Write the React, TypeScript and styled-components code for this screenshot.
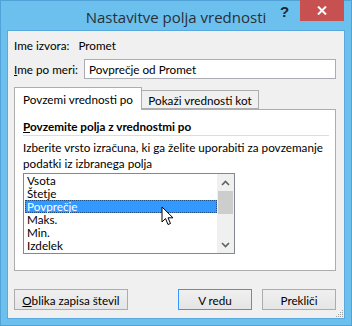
import React from 'react';
import styled, { createGlobalStyle } from 'styled-components';

const GlobalStyle = createGlobalStyle`
  html, body { margin: 0; padding: 0; background: #6bc0ee; }
  body { font-family: Lato, "Liberation Sans", Arial, sans-serif; }
`;

const Frame = styled.div`
  position: relative;
  width: 352px;
  height: 326px;
  box-sizing: border-box;
  background: #6bc0ee;
  box-shadow: inset 0 0 0 1px #52a2d8;
  display: flex;
  flex-direction: column;
  padding: 0 8px 8px 8px;
`;

const TitleBar = styled.div`
  height: 31px;
  display: flex;
  align-items: center;
  justify-content: center;
  font-family: "Open Sans", "Noto Sans", sans-serif;
  font-size: 15px;
  color: #2a2f36;
  padding-top: 2px;
  box-sizing: border-box;
`;

const HelpGlyph = styled.div`
  position: absolute;
  top: 3px;
  left: 280px;
  font-family: "Liberation Sans", Arial, sans-serif;
  font-weight: bold;
  font-size: 15px;
  color: #1e2630;
`;

const CloseButton = styled.div`
  position: absolute;
  top: 0;
  right: 8px;
  width: 44px;
  height: 21px;
  background: #c75050;
  display: flex;
  align-items: center;
  justify-content: center;
`;

const Client = styled.div`
  position: relative;
  flex: 1;
  background: #f0f0f0;
  box-shadow: 0 0 0 1px #5aa9de;
  display: flex;
  flex-direction: column;
  padding: 0 8px 0 6px;
  font-size: 11.7px;
  color: #000;
`;

const SourceRow = styled.div`
  height: 28px;
  display: flex;
  align-items: center;
  gap: 9px;
`;

const NameRow = styled.div`
  height: 20px;
  display: flex;
  align-items: center;
  justify-content: space-between;
`;

const TextInput = styled.div`
  width: 252px;
  height: 20px;
  box-sizing: border-box;
  border: 1px solid #abadb3;
  background: #fff;
  display: flex;
  align-items: center;
  padding-left: 4px;
`;

const TabStrip = styled.div`
  margin-top: 8px;
  height: 22px;
  display: flex;
  align-items: flex-end;
`;

const Tab = styled.div<{ $active?: boolean }>`
  box-sizing: border-box;
  height: ${(p) => (p.$active ? '23px' : '19px')};
  width: ${(p) => (p.$active ? '128px' : '118px')};
  border: 1px solid #adadad;
  border-bottom: ${(p) => (p.$active ? 'none' : '1px solid #adadad')};
  background: ${(p) => (p.$active ? '#fff' : '#f0f0f0')};
  display: flex;
  align-items: center;
  justify-content: center;
  margin-left: ${(p) => (p.$active ? '0' : '-1px')};
  margin-bottom: ${(p) => (p.$active ? '-1px' : '0')};
  position: relative;
  z-index: ${(p) => (p.$active ? 1 : 0)};
  padding-top: ${(p) => (p.$active ? '0' : '1px')};
`;

const Panel = styled.div`
  box-sizing: border-box;
  height: 162px;
  border: 1px solid #adadad;
  background: #fff;
  padding: 8px 6px 0 8px;
  display: flex;
  flex-direction: column;
`;

const SectionTitle = styled.div`
  font-weight: bold;
  height: 16px;
  line-height: 16px;
  padding-bottom: 1px;
  border-bottom: 1px solid #dcdcdc;
`;

const Description = styled.div`
  margin-top: 3px;
  line-height: 16px;
  white-space: nowrap;
`;

const ListBox = styled.div`
  margin-top: 2px;
  width: 212px;
  height: 81px;
  box-sizing: border-box;
  border: 1px solid #828790;
  display: flex;
  padding: 0 0 0 1px;
`;

const Items = styled.div`
  flex: 1;
  display: flex;
  flex-direction: column;
`;

const Item = styled.div<{ $selected?: boolean }>`
  height: 13px;
  line-height: 13px;
  padding-left: 2px;
  box-sizing: border-box;
  background: ${(p) => (p.$selected ? '#3399ff' : 'transparent')};
  color: ${(p) => (p.$selected ? '#fff' : '#000')};
  outline: ${(p) => (p.$selected ? '1px dotted #1a4f8a' : 'none')};
  outline-offset: -1px;
`;

const ScrollBar = styled.div`
  width: 17px;
  background: #f0f0f0;
  display: flex;
  flex-direction: column;
  align-items: center;
`;

const Arrow = styled.div`
  height: 17px;
  width: 17px;
  display: flex;
  align-items: center;
  justify-content: center;
`;

const Thumb = styled.div`
  width: 15px;
  height: 23px;
  background: #cdcdcd;
`;

const Track = styled.div`
  flex: 1;
`;

const ButtonRow = styled.div`
  margin-top: 18px;
  display: flex;
  align-items: center;
`;

const Button = styled.div<{ $w: number; $default?: boolean }>`
  box-sizing: border-box;
  width: ${(p) => p.$w}px;
  height: 21px;
  border: 1px solid ${(p) => (p.$default ? '#3399ff' : '#acacac')};
  background: linear-gradient(#f0f0f0, #e5e5e5);
  display: flex;
  align-items: center;
  justify-content: center;
`;

const Spacer = styled.div`
  flex: 1;
`;

const Cursor = styled.svg`
  position: absolute;
  left: 153px;
  top: 175px;
`;

const Grip = styled.svg`
  position: absolute;
  right: 0;
  bottom: 0;
`;

const U = styled.span`
  text-decoration: underline;
`;

const Chevron: React.FC<{ up?: boolean }> = ({ up }) => (
  <svg width="9" height="6" viewBox="0 0 9 6">
    <path
      d={up ? 'M1 5 L4.5 1.5 L8 5' : 'M1 1 L4.5 4.5 L8 1'}
      fill="none"
      stroke="#606060"
      strokeWidth="1.6"
    />
  </svg>
);

export default function App() {
  const items = ['Vsota', 'Štetje', 'Povprečje', 'Maks.', 'Min.', 'Izdelek'];
  return (
    <>
      <GlobalStyle />
      <Frame>
        <TitleBar>Nastavitve polja vrednosti</TitleBar>
        <HelpGlyph>?</HelpGlyph>
        <CloseButton>
          <svg width="10" height="9" viewBox="0 0 10 9">
            <path d="M1 0.5 L9 8.5 M9 0.5 L1 8.5" stroke="#fff" strokeWidth="2" />
          </svg>
        </CloseButton>
        <Client>
          <SourceRow>
            <span>Ime izvora:</span>
            <span>Promet</span>
          </SourceRow>
          <NameRow>
            <span>
              <U>I</U>me po meri:
            </span>
            <TextInput>Povprečje od Promet</TextInput>
          </NameRow>
          <TabStrip>
            <Tab $active>Povzemi vrednosti po</Tab>
            <Tab>Pokaži vrednosti kot</Tab>
          </TabStrip>
          <Panel>
            <SectionTitle>
              <U>P</U>ovzemite polja z vrednostmi po
            </SectionTitle>
            <Description>
              Izberite vrsto izračuna, ki ga želite uporabiti za povzemanje
              <br />
              podatki iz izbranega polja
            </Description>
            <ListBox>
              <Items>
                {items.map((it) => (
                  <Item key={it} $selected={it === 'Povprečje'}>
                    {it}
                  </Item>
                ))}
              </Items>
              <ScrollBar>
                <Arrow>
                  <Chevron up />
                </Arrow>
                <Thumb />
                <Track />
                <Arrow>
                  <Chevron />
                </Arrow>
              </ScrollBar>
            </ListBox>
          </Panel>
          <ButtonRow>
            <Button $w={114}>
              <span>
                <U>O</U>blika zapisa števil
              </span>
            </Button>
            <Spacer />
            <Button $w={74} $default>
              V redu
            </Button>
            <Button $w={74} style={{ marginLeft: 10 }}>
              Prekliči
            </Button>
          </ButtonRow>
          <Cursor width="14" height="22" viewBox="0 0 14 22">
            <path
              d="M1 1 L1 16 L4.5 12.5 L7 18.5 L9.5 17.5 L7 11.8 L12 11.8 Z"
              fill="#fff"
              stroke="#000"
              strokeWidth="1"
              strokeLinejoin="miter"
            />
          </Cursor>
          <Grip width="10" height="10" viewBox="0 0 10 10">
            <g fill="#a0a0a0">
              <rect x="8" y="2" width="1" height="1" />
              <rect x="6" y="4" width="1" height="1" />
              <rect x="8" y="4" width="1" height="1" />
              <rect x="4" y="6" width="1" height="1" />
              <rect x="6" y="6" width="1" height="1" />
              <rect x="8" y="6" width="1" height="1" />
              <rect x="2" y="8" width="1" height="1" />
              <rect x="4" y="8" width="1" height="1" />
              <rect x="6" y="8" width="1" height="1" />
              <rect x="8" y="8" width="1" height="1" />
            </g>
          </Grip>
        </Client>
      </Frame>
    </>
  );
}
